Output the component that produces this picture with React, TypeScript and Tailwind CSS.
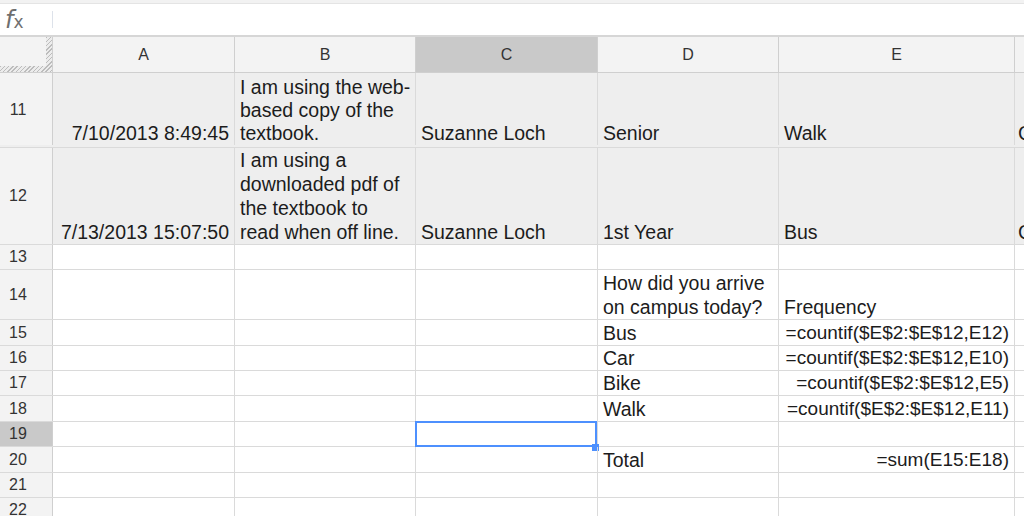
import React from "react";

type Cell = { text?: string | string[]; right?: boolean; small?: boolean };

interface Row {
  n: number;
  h: string;
  shade?: boolean;
  selected?: boolean;
  pad?: string;
  cells: Cell[];
}

const widths = ["w-[182px]", "w-[181px]", "w-[182px]", "w-[181px]", "w-[236px]"];
const letters = ["A", "B", "C", "D", "E"];

const rows: Row[] = [
  {
    n: 11,
    h: "h-[75px]",
    shade: true,
    pad: "pb-[2px] leading-[23px]",
    cells: [
      { text: "7/10/2013 8:49:45", right: true },
      { text: ["I am using the web-", "based copy of the", "textbook."] },
      { text: "Suzanne Loch" },
      { text: "Senior" },
      { text: "Walk" },
      { text: "C" },
    ],
  },
  {
    n: 12,
    h: "h-[97px]",
    shade: true,
    cells: [
      { text: "7/13/2013 15:07:50", right: true },
      { text: ["I am using a", "downloaded pdf of", "the textbook to", "read when off line."] },
      { text: "Suzanne Loch" },
      { text: "1st Year" },
      { text: "Bus" },
      { text: "C" },
    ],
  },
  { n: 13, h: "h-[25px]", cells: [] },
  {
    n: 14,
    h: "h-[50px]",
    cells: [{}, {}, {}, { text: ["How did you arrive", "on campus today?"] }, { text: "Frequency" }],
  },
  { n: 15, h: "h-[26px]", cells: [{}, {}, {}, { text: "Bus" }, { text: "=countif($E$2:$E$12,E12)", right: true, small: true }] },
  { n: 16, h: "h-[25px]", cells: [{}, {}, {}, { text: "Car" }, { text: "=countif($E$2:$E$12,E10)", right: true, small: true }] },
  { n: 17, h: "h-[25px]", cells: [{}, {}, {}, { text: "Bike" }, { text: "=countif($E$2:$E$12,E5)", right: true, small: true }] },
  { n: 18, h: "h-[26px]", cells: [{}, {}, {}, { text: "Walk" }, { text: "=countif($E$2:$E$12,E11)", right: true, small: true }] },
  { n: 19, h: "h-[25px]", selected: true, cells: [] },
  { n: 20, h: "h-[26px]", cells: [{}, {}, {}, { text: "Total" }, { text: "=sum(E15:E18)", right: true, small: true }] },
  { n: 21, h: "h-[25px]", cells: [] },
  { n: 22, h: "h-[25px]", cells: [] },
];

function CellText({ cell }: { cell?: Cell }) {
  if (!cell || !cell.text) return null;
  const lines = Array.isArray(cell.text) ? cell.text : [cell.text];
  return (
    <div className={`${cell.right ? "text-right" : ""} ${cell.small ? "text-[19px]" : ""}`}>
      {lines.map((l) => (
        <div key={l} className="whitespace-nowrap">
          {l}
        </div>
      ))}
    </div>
  );
}

function GridRow({ row }: { row: Row }) {
  return (
    <div
      className={`flex ${row.h} shrink-0 border-b border-[#dadada] ${row.shade ? "bg-[#eeeeee]" : "bg-white"} ${
        row.pad ?? ""
      }`}
    >
      <div
        className={`w-[53px] shrink-0 flex items-center justify-center pr-[16px] border-r border-[#cfcfcf] text-[16px] text-[#333] ${
          row.selected ? "bg-[#c9c9c9]" : "bg-[#f3f3f3]"
        }`}
      >
        {row.n}
      </div>
      {widths.map((w, i) => {
        const cell = row.cells[i];
        return (
          <div
            key={i}
            className={`${w} shrink-0 relative flex items-end border-r border-[#dadada] ${
              cell?.right ? "justify-end pr-[5px]" : "pl-[5px]"
            }`}
          >
            <CellText cell={cell} />
            {row.selected && i === 2 && (
              <>
                <div className="absolute -left-[1px] -top-[1px] right-0 -bottom-[1px] border-2 border-[#4d90fe]" />
                <div className="absolute -right-[2px] -bottom-[5px] w-[7px] h-[7px] bg-[#4d90fe]" />
              </>
            )}
          </div>
        );
      })}
      <div className="flex-1 min-w-0 overflow-hidden flex items-end pl-[3px]">
        <CellText cell={row.cells[5]} />
      </div>
    </div>
  );
}

export default function App() {
  return (
    <div className="w-full h-[516px] overflow-hidden bg-white flex flex-col font-['Liberation_Sans',Arial,sans-serif] text-[19.5px] leading-[24px] text-[#1c1c1c]">
      <div className="h-[4px] shrink-0 bg-[#f2f2f2] border-b border-[#e4e4e4]" />
      <div className="h-[33px] shrink-0 flex items-center bg-white border-b-2 border-[#d6d6d6]">
        <div className="w-[52px] shrink-0 pl-[5px] flex items-baseline text-[#6f6f6f] font-['DejaVu_Sans',sans-serif]">
          <span className="italic text-[24px] leading-none">f</span>
          <span className="text-[17px] leading-none">x</span>
        </div>
        <div className="w-[1px] h-[17px] bg-[#dde2ea]" />
      </div>
      <div className="flex h-[36px] shrink-0 border-b border-[#cfcfcf] bg-[#f3f3f3] text-[16px] text-[#333]">
        <div className="w-[53px] shrink-0 flex flex-col border-r border-[#cfcfcf]">
          <div className="flex-1 flex">
            <div className="flex-1" />
            <div className="w-[6px] bg-[repeating-linear-gradient(135deg,#bcbcbc_0px,#bcbcbc_1px,#ececec_1px,#ececec_3px)]" />
          </div>
          <div className="h-[6px] bg-[repeating-linear-gradient(135deg,#bcbcbc_0px,#bcbcbc_1px,#ececec_1px,#ececec_3px)]" />
        </div>
        {widths.map((w, i) => (
          <div
            key={i}
            className={`${w} shrink-0 flex items-center justify-center border-r border-[#cfcfcf] ${
              i === 2 ? "bg-[#c9c9c9]" : ""
            }`}
          >
            {letters[i]}
          </div>
        ))}
        <div className="flex-1" />
      </div>
      {rows.map((r) => (
        <GridRow key={r.n} row={r} />
      ))}
    </div>
  );
}
